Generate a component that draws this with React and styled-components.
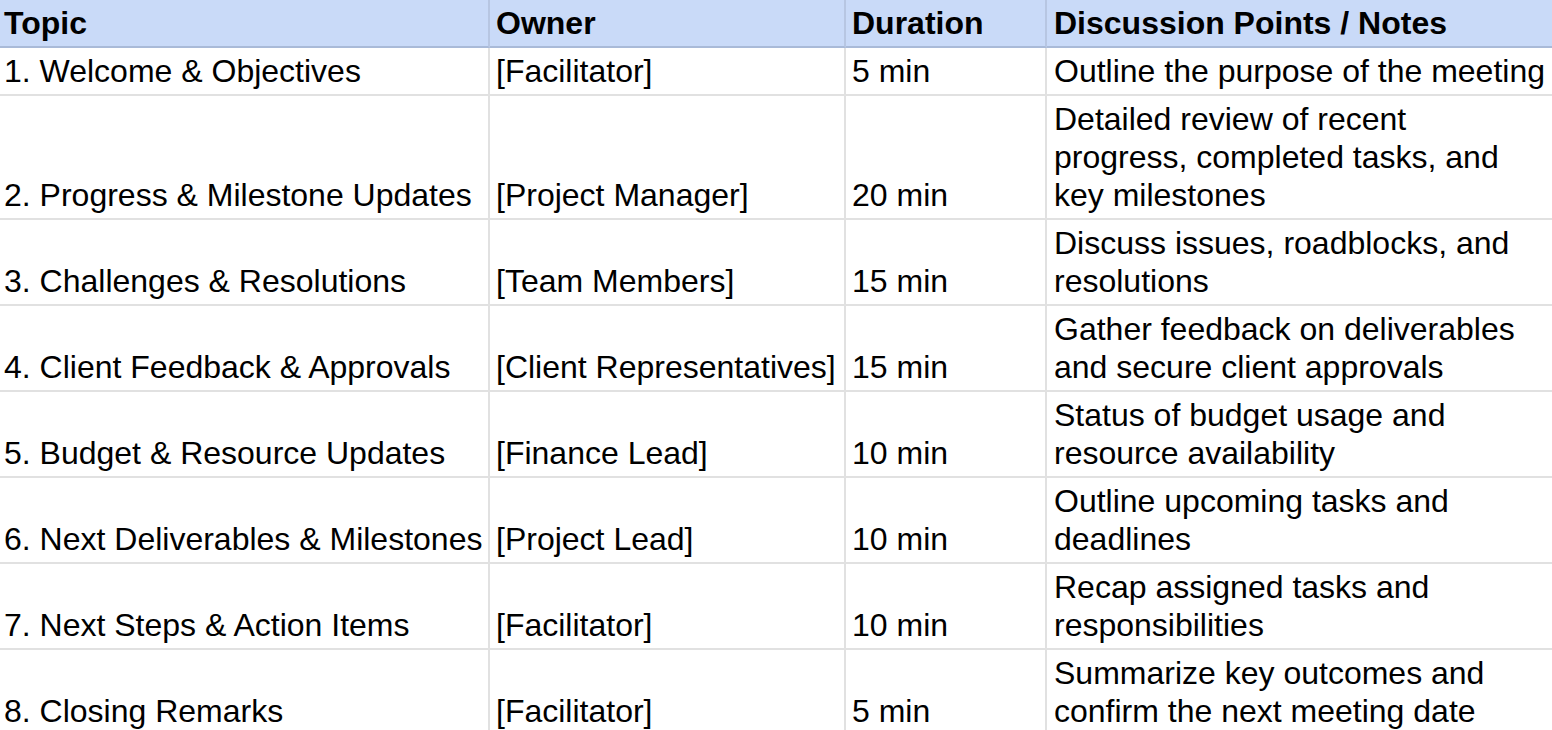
import React from "react";
import styled, { createGlobalStyle } from "styled-components";

const rows = [
  ["1. Welcome & Objectives", "[Facilitator]", "5 min", "Outline the purpose of the meeting"],
  ["2. Progress & Milestone Updates", "[Project Manager]", "20 min", "Detailed review of recent progress, completed tasks, and key milestones"],
  ["3. Challenges & Resolutions", "[Team Members]", "15 min", "Discuss issues, roadblocks, and resolutions"],
  ["4. Client Feedback & Approvals", "[Client Representatives]", "15 min", "Gather feedback on deliverables and secure client approvals"],
  ["5. Budget & Resource Updates", "[Finance Lead]", "10 min", "Status of budget usage and resource availability"],
  ["6. Next Deliverables & Milestones", "[Project Lead]", "10 min", "Outline upcoming tasks and deadlines"],
  ["7. Next Steps & Action Items", "[Facilitator]", "10 min", "Recap assigned tasks and responsibilities"],
  ["8. Closing Remarks", "[Facilitator]", "5 min", "Summarize key outcomes and confirm the next meeting date"],
];

const headers = ["Topic", "Owner", "Duration", "Discussion Points / Notes"];

const GlobalStyle = createGlobalStyle`
  html, body {
    margin: 0;
    padding: 0;
    overflow: hidden;
    background: #ffffff;
  }
  body {
    font-family: "Liberation Sans", Arial, sans-serif;
    color: #000000;
  }
`;

const Sheet = styled.div`
  display: grid;
  grid-template-columns: 490px 356px 201px 505px;
  width: 1552px;
`;

const Cell = styled.div`
  display: flex;
  align-items: flex-end;
  box-sizing: border-box;
  min-width: 0;
  font-size: 32px;
  line-height: 38px;
  font-weight: ${({ $head }) => ($head ? 700 : 400)};
  background: ${({ $head }) => ($head ? "#c9daf8" : "#ffffff")};
  padding-top: 4px;
  padding-bottom: 4px;
  padding-left: ${({ $lead, $wide }) => ($lead ? "4px" : $wide ? "7px" : "6px")};
  padding-right: ${({ $wide }) => ($wide ? "5.5px" : "0")};
  border-right: ${({ $wide, $head }) =>
    $wide ? "none" : $head ? "2px solid #b7c6e2" : "2px solid #e1e1e1"};
  border-bottom: 2px solid ${({ $head }) => ($head ? "#a9bad8" : "#e1e1e1")};
  white-space: ${({ $wide }) => ($wide ? "normal" : "nowrap")};
`;

export default function App() {
  return (
    <>
      <GlobalStyle />
      <Sheet>
        {headers.map((h, i) => (
          <Cell key={h} $head $lead={i === 0} $wide={i === 3}>
            {h}
          </Cell>
        ))}
        {rows.map((row, r) =>
          row.map((text, i) => (
            <Cell key={r + "-" + i} $lead={i === 0} $wide={i === 3}>
              {text}
            </Cell>
          ))
        )}
      </Sheet>
    </>
  );
}
